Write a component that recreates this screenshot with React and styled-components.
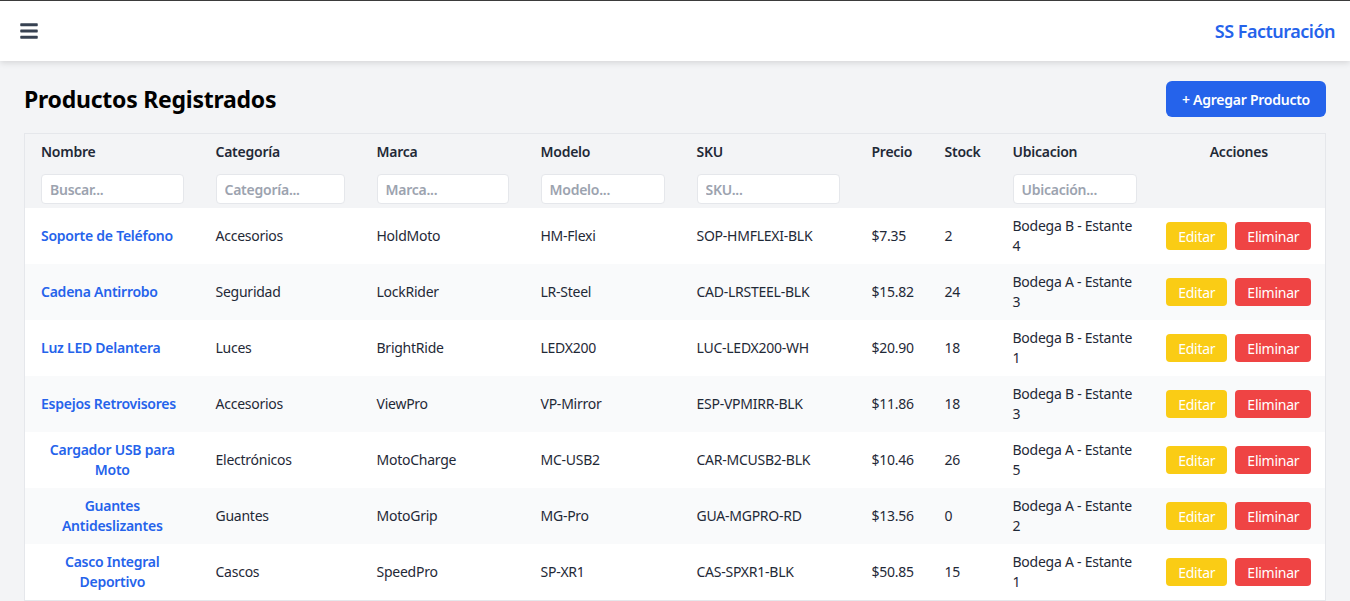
import styled, { createGlobalStyle } from "styled-components";
import { FaBars } from "react-icons/fa";

const GlobalStyle = createGlobalStyle`
  * { box-sizing: border-box; }
  body {
    margin: 0;
    font-family: "Noto Sans", "Open Sans", Arial, sans-serif;
    letter-spacing: -0.25px;
    background: #f3f4f6;
    color: #1f2937;
  }
  button, input {
    letter-spacing: inherit;
  }
`;

// styles
const TopBar = styled.header`
  height: 61px;
  border-top: 1px solid #3b3b3b;
  background: #fff;
  box-shadow: 0 2px 6px rgba(0, 0, 0, 0.12);
  display: flex;
  align-items: center;
  justify-content: space-between;
  padding: 0 15px 0 19px;
  position: relative;
`;

const MenuButton = styled.button`
  background: none;
  border: none;
  padding: 0;
  display: flex;
  color: #374151;
  cursor: pointer;
`;

const Brand = styled.span`
  color: #2563eb;
  font-size: 18px;
  font-weight: 600;
  letter-spacing: -0.5px;
`;

const Main = styled.main`
  padding: 20px 24px 24px;
`;

const TitleRow = styled.div`
  display: flex;
  align-items: center;
  justify-content: space-between;
  margin-bottom: 16px;
`;

const Title = styled.h1`
  margin: 0;
  font-size: 23px;
  font-weight: 700;
  letter-spacing: -0.25px;
  color: #000;
`;

const AddButton = styled.button`
  height: 36px;
  padding: 0 16px;
  border: none;
  border-radius: 6px;
  background: #2563eb;
  color: #fff;
  font-family: inherit;
  font-size: 14px;
  font-weight: 600;
  cursor: pointer;
`;

const Table = styled.table`
  width: 100%;
  table-layout: fixed;
  border-collapse: collapse;
  border: 1px solid #e5e7eb;
  background: #fff;
  font-size: 14px;
`;

const Th = styled.th`
  width: ${(p) => (p.$w ? `${p.$w}px` : "auto")};
  background: #f3f4f6;
  padding: 8px 16px 4px;
  text-align: ${(p) => (p.$center ? "center" : "left")};
  vertical-align: top;
  font-weight: 600;
  color: #1f2937;
`;

const ThLabel = styled.div`
  line-height: 20px;
  height: 20px;
`;

const Filter = styled.input`
  display: block;
  width: 100%;
  height: 30px;
  margin-top: 12px;
  padding: 0 8px;
  border: 1px solid #e5e7eb;
  border-radius: 4px;
  font-family: inherit;
  font-size: 14px;
  font-weight: 600;
  background: #fff;
  &::placeholder {
    color: #9ca3af;
  }
`;

const Row = styled.tr`
  background: ${(p) => (p.$alt ? "#f9fafb" : "#fff")};
`;

const Td = styled.td`
  height: 56px;
  padding: 8px 16px;
  line-height: 20px;
  vertical-align: middle;
  color: #1f2937;
  text-align: ${(p) => (p.$center ? "center" : "left")};
`;

const NameLink = styled.button`
  background: none;
  border: none;
  padding: 0;
  font-family: inherit;
  font-size: 14px;
  line-height: 20px;
  font-weight: 600;
  color: #2563eb;
  text-align: center;
  cursor: pointer;
`;

const Actions = styled.div`
  display: flex;
  justify-content: center;
  gap: 8px;
`;

const ActionButton = styled.button`
  height: 28px;
  padding: 0 12px;
  border: none;
  border-radius: 4px;
  background: ${(p) => (p.$danger ? "#ef4444" : "#facc15")};
  color: #fff;
  font-family: inherit;
  font-size: 14px;
  cursor: pointer;
`;

const columns = [
  { label: "Nombre", w: 175, ph: "Buscar..." },
  { label: "Categoría", w: 161, ph: "Categoría..." },
  { label: "Marca", w: 164, ph: "Marca..." },
  { label: "Modelo", w: 156, ph: "Modelo..." },
  { label: "SKU", w: 175, ph: "SKU..." },
  { label: "Precio", w: 73 },
  { label: "Stock", w: 68 },
  { label: "Ubicacion", w: 156, ph: "Ubicación..." },
];

const productos = [
  ["Soporte de Teléfono", "Accesorios", "HoldMoto", "HM-Flexi", "SOP-HMFLEXI-BLK", "$7.35", "2", "Bodega B - Estante 4"],
  ["Cadena Antirrobo", "Seguridad", "LockRider", "LR-Steel", "CAD-LRSTEEL-BLK", "$15.82", "24", "Bodega A - Estante 3"],
  ["Luz LED Delantera", "Luces", "BrightRide", "LEDX200", "LUC-LEDX200-WH", "$20.90", "18", "Bodega B - Estante 1"],
  ["Espejos Retrovisores", "Accesorios", "ViewPro", "VP-Mirror", "ESP-VPMIRR-BLK", "$11.86", "18", "Bodega B - Estante 3"],
  ["Cargador USB para Moto", "Electrónicos", "MotoCharge", "MC-USB2", "CAR-MCUSB2-BLK", "$10.46", "26", "Bodega A - Estante 5"],
  ["Guantes Antideslizantes", "Guantes", "MotoGrip", "MG-Pro", "GUA-MGPRO-RD", "$13.56", "0", "Bodega A - Estante 2"],
  ["Casco Integral Deportivo", "Cascos", "SpeedPro", "SP-XR1", "CAS-SPXR1-BLK", "$50.85", "15", "Bodega A - Estante 1"],
];

const App = () => {
  return (
    <>
      <GlobalStyle />
      <TopBar>
        <MenuButton aria-label="Menú">
          <FaBars size={20} />
        </MenuButton>
        <Brand>SS Facturación</Brand>
      </TopBar>
      <Main>
        <TitleRow>
          <Title>Productos Registrados</Title>
          <AddButton>+ Agregar Producto</AddButton>
        </TitleRow>
        <Table>
          <thead>
            <tr>
              {columns.map((c) => (
                <Th key={c.label} $w={c.w}>
                  <ThLabel>{c.label}</ThLabel>
                  {c.ph && <Filter placeholder={c.ph} />}
                </Th>
              ))}
              <Th $center>
                <ThLabel>Acciones</ThLabel>
              </Th>
            </tr>
          </thead>
          <tbody>
            {productos.map((p, i) => (
              <Row key={p[4]} $alt={i % 2 === 1}>
                <Td>
                  <NameLink>{p[0]}</NameLink>
                </Td>
                {p.slice(1).map((v, j) => (
                  <Td key={j}>{v}</Td>
                ))}
                <Td $center>
                  <Actions>
                    <ActionButton>Editar</ActionButton>
                    <ActionButton $danger>Eliminar</ActionButton>
                  </Actions>
                </Td>
              </Row>
            ))}
          </tbody>
        </Table>
      </Main>
    </>
  );
};

export default App;
